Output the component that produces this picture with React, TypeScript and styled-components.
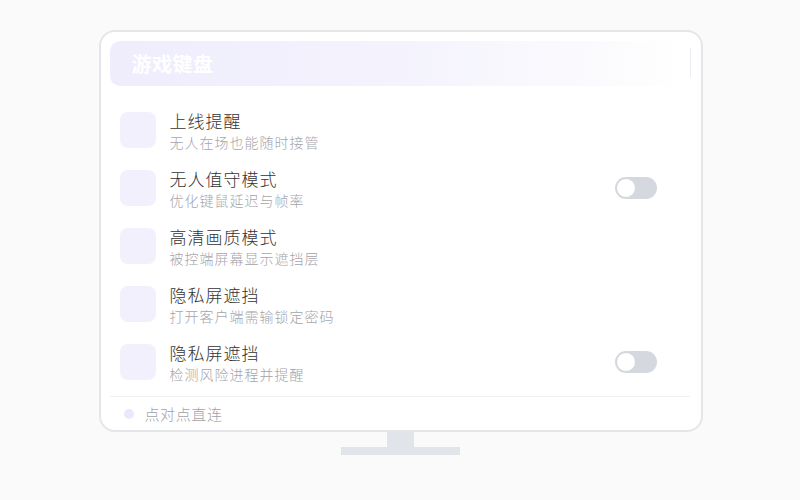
import React from "react";
import styled, { createGlobalStyle } from "styled-components";

const Global = createGlobalStyle`
  html, body { margin: 0; padding: 0; background: #fafafa; }
  body { font-family: "Noto Sans CJK SC", "Noto Sans", sans-serif; }
`;

const Page = styled.div`
  width: 800px;
  height: 500px;
  display: flex;
  flex-direction: column;
  align-items: center;
  padding-top: 30px;
  box-sizing: border-box;
  background: #fafafa;
`;

const Monitor = styled.div`
  width: 604px;
  height: 402px;
  box-sizing: border-box;
  border: 2px solid #e4e6ea;
  border-radius: 16px;
  background: #fff;
  padding: 9px 0 0 9px;
  display: flex;
  flex-direction: column;
  margin-left: 1px;
`;

const HeaderRow = styled.div`
  display: flex;
  align-items: flex-start;
`;

const HeaderBar = styled.div`
  width: 580px;
  height: 45px;
  border-radius: 10px;
  background: linear-gradient(90deg, #efedfc 0%, #f3f2fd 45%, #fafafe 80%, #ffffff 100%);
  display: flex;
  align-items: center;
  padding-left: 22px;
  box-sizing: border-box;
`;

const HeaderTitle = styled.span`
  color: #ffffff;
  font-size: 20px;
  font-weight: 700;
  letter-spacing: 0.5px;
`;

const ScrollLine = styled.div`
  width: 1px;
  height: 29px;
  margin-top: 7px;
  background: #ebebf0;
`;

const List = styled.div`
  width: 580px;
  margin-top: 15px;
  display: flex;
  flex-direction: column;
`;

const Row = styled.div`
  height: 58px;
  display: flex;
  align-items: center;
  padding: 0 33px 0 10px;
  gap: 14px;
`;

const IconBox = styled.div`
  width: 36px;
  height: 36px;
  border-radius: 8px;
  background: #f2f0fd;
  flex-shrink: 0;
`;

const Texts = styled.div`
  flex: 1;
  display: flex;
  flex-direction: column;
  gap: 1px;
  padding-top: 1px;
`;

const Title = styled.div`
  font-size: 17px;
  line-height: 22px;
  color: #333333;
  font-weight: 300;
  letter-spacing: 1px;
`;

const Sub = styled.div`
  font-size: 14px;
  line-height: 19px;
  color: #a4a4aa;
  font-weight: 300;
  letter-spacing: 1px;
`;

const Toggle = styled.div`
  width: 42px;
  height: 22px;
  border-radius: 11px;
  background: #d5d8de;
  box-sizing: border-box;
  padding: 1px;
  display: flex;
  align-items: center;
`;

const Knob = styled.div`
  width: 20px;
  height: 20px;
  border-radius: 50%;
  background: #fff;
  box-sizing: border-box;
  border: 1px solid #d3d6dc;
`;

const Divider = styled.div`
  width: 580px;
  height: 1px;
  background: #eeeff2;
  margin-top: 5px;
`;

const Footer = styled.div`
  width: 580px;
  height: 33px;
  display: flex;
  align-items: center;
  padding-left: 14px;
  gap: 11px;
  box-sizing: border-box;
`;

const Dot = styled.div`
  width: 10px;
  height: 10px;
  border-radius: 50%;
  background: #ebe8fb;
`;

const FooterText = styled.span`
  font-size: 15px;
  color: #a3a3a8;
  font-weight: 300;
  letter-spacing: 0.6px;
`;

const Neck = styled.div`
  width: 27px;
  height: 15px;
  background: #e1e4e8;
  margin-left: 1px;
`;

const Base = styled.div`
  width: 119px;
  height: 8px;
  background: #e1e4e8;
  margin-left: 1px;
`;

const items = [
  { title: "上线提醒", sub: "无人在场也能随时接管", toggle: false },
  { title: "无人值守模式", sub: "优化键鼠延迟与帧率", toggle: true },
  { title: "高清画质模式", sub: "被控端屏幕显示遮挡层", toggle: false },
  { title: "隐私屏遮挡", sub: "打开客户端需输锁定密码", toggle: false },
  { title: "隐私屏遮挡", sub: "检测风险进程并提醒", toggle: true },
];

export default function App() {
  return (
    <>
      <Global />
      <Page>
        <Monitor>
          <HeaderRow>
            <HeaderBar>
              <HeaderTitle>游戏键盘</HeaderTitle>
            </HeaderBar>
            <ScrollLine />
          </HeaderRow>
          <List>
            {items.map((it, i) => (
              <Row key={i}>
                <IconBox />
                <Texts>
                  <Title>{it.title}</Title>
                  <Sub>{it.sub}</Sub>
                </Texts>
                {it.toggle && (
                  <Toggle>
                    <Knob />
                  </Toggle>
                )}
              </Row>
            ))}
          </List>
          <Divider />
          <Footer>
            <Dot />
            <FooterText>点对点直连</FooterText>
          </Footer>
        </Monitor>
        <Neck />
        <Base />
      </Page>
    </>
  );
}
